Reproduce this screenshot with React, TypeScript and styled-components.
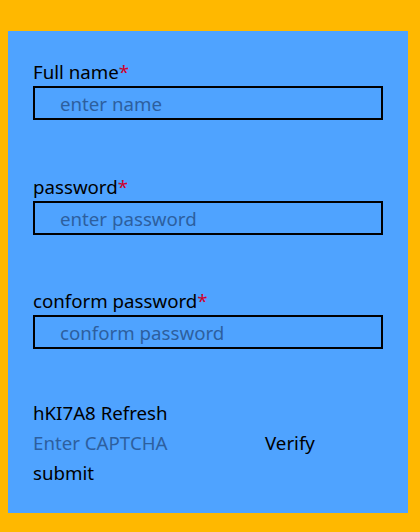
import * as React from "react";
import styled, { createGlobalStyle } from "styled-components";

const GlobalStyle = createGlobalStyle`
  html, body {
    background: #ffb800;
  }
  body {
    margin: 8px;
    font-family: "Noto Sans", "Open Sans", sans-serif;
  }
`;

const Panel = styled.form`
  margin-top: 23px;
  width: 400px;
  box-sizing: border-box;
  background: #4fa3ff;
  padding: 28px 25px 25px 25px;
  display: flex;
  flex-direction: column;
`;

const Field = styled.div<{ $gap: number }>`
  display: flex;
  flex-direction: column;
  margin-bottom: ${(p) => p.$gap}px;
`;

const Label = styled.label`
  font-size: 18.7px;
  line-height: 26px;
  color: #000;
`;

const Required = styled.span`
  color: #d0002a;
`;

const TextInput = styled.input`
  box-sizing: border-box;
  width: 350px;
  height: 34px;
  margin-top: 1px;
  border: 2px solid #000;
  background: transparent;
  padding: 0 25px;
  font: inherit;
  font-size: 18.7px;
  color: #000;
  outline: none;
  &::placeholder {
    color: #2d5f9e;
  }
`;

const Line = styled.div`
  display: flex;
  align-items: center;
  font-size: 18.7px;
  line-height: 30px;
  color: #000;
`;

const CaptchaInput = styled.input`
  box-sizing: border-box;
  width: 232px;
  border: none;
  background: transparent;
  padding: 0;
  font: inherit;
  font-size: 18.7px;
  line-height: 30px;
  outline: none;
  &::placeholder {
    color: #2d5f9e;
  }
`;

const PlainButton = styled.button`
  border: none;
  background: transparent;
  padding: 0;
  font: inherit;
  font-size: 18.7px;
  color: #000;
  cursor: pointer;
`;

interface FieldProps {
  label: string;
  placeholder: string;
  type?: string;
  gap?: number;
}

const FormField = ({ label, placeholder, type = "text", gap = 53 }: FieldProps) => (
  <Field $gap={gap}>
    <Label>
      {label}
      <Required>*</Required>
    </Label>
    <TextInput type={type} placeholder={placeholder} />
  </Field>
);

export default function App() {
  return (
    <>
      <GlobalStyle />
      <Panel onSubmit={(e) => e.preventDefault()}>
        <FormField label="Full name" placeholder="enter name" gap={54} />
        <FormField label="password" placeholder="enter password" type="password" />
        <FormField
          label="conform password"
          placeholder="conform password"
          type="password"
          gap={49}
        />
        <Line>
          hKI7A8&nbsp;<PlainButton type="button">Refresh</PlainButton>
        </Line>
        <Line>
          <CaptchaInput placeholder="Enter CAPTCHA" />
          <PlainButton type="button">Verify</PlainButton>
        </Line>
        <Line>
          <PlainButton type="submit">submit</PlainButton>
        </Line>
      </Panel>
    </>
  );
}
